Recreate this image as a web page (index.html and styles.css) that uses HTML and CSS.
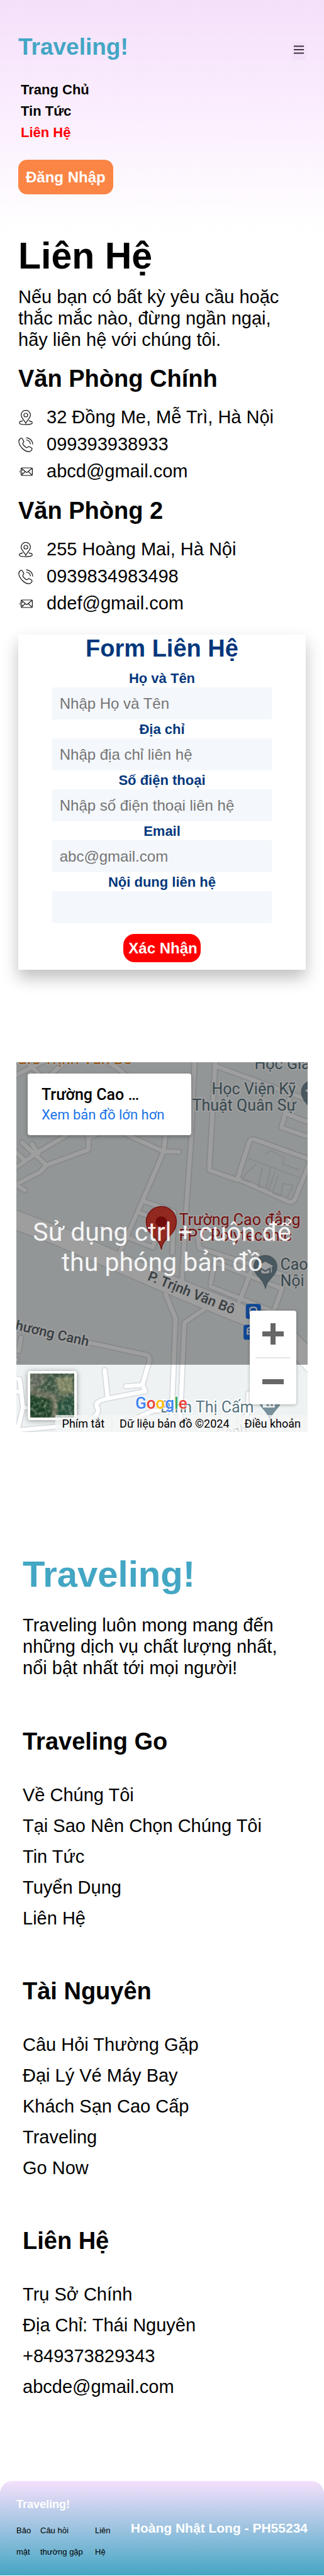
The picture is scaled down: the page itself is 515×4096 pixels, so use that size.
FILE: index.html
```html
<!DOCTYPE html>
<html lang="vi">
<head>
<meta charset="utf-8">
<meta name="viewport" content="width=device-width, initial-scale=1">
<title>Traveling! - Liên Hệ</title>
<link rel="stylesheet" href="styles.css">
</head>
<body>
<svg class="sprite" aria-hidden="true">
  <symbol id="icon-pin" viewBox="0 0 24 24">
    <path d="M12 21 C10 16.500 4.600 12.600 4.600 7.800 A7.400 7.400 0 0 1 19.400 7.800 C19.400 12.600 14 16.500 12 21 Z"/>
    <circle cx="12" cy="8" r="3"/>
    <path d="M7.400 17.200 C4 17.600 1.700 18.700 1.700 20.200 C1.700 22.200 6 23.200 12 23.200 S22.300 22.200 22.300 20.200 C22.300 18.700 20 17.600 16.600 17.200"/>
  </symbol>
  <symbol id="icon-phone" viewBox="0 0 24 24">
    <path d="M4.200 1.800 C2 3.200 .7 4.800 .9 7.200 C1.600 14.500 9.500 22.600 16.300 23.200 C18.600 23.400 20.700 21.600 21.800 19.700 C22.500 18.300 21.800 17.700 20.600 17 L17.800 15.300 C16.600 14.700 16 15 15.200 15.900 C14.300 17 13.400 17 12.300 16.300 C10.400 15.100 8.800 13.500 7.600 11.600 C6.900 10.500 7 9.700 8 8.900 C9 8.100 9.200 7.500 8.600 6.400 L6.800 3 C6 1.700 5.400 1.200 4.200 1.800 Z"/>
    <path d="M12.500 .9 C18.600 1.300 22.900 5.800 23.200 11.600 M12.800 4.500 C16.600 5 19.100 7.500 19.500 11.200"/>
  </symbol>
  <symbol id="icon-mail" viewBox="0 0 24 24">
    <path d="M4.600 8.800 V7.200 Q4.600 6 5.800 6 H21.200 Q22.400 6 22.400 7.200 V16.800 Q22.400 18 21.200 18 H5.800 Q4.600 18 4.600 16.800 V15.500"/>
    <path d="M5 6.500 L12.400 12.800 Q13.500 13.600 14.600 12.800 L22 6.500 M5.200 17.500 L11 11.900 M21.900 17.500 L16.100 11.900 M3.200 9.800 H7 M1.500 12 H6 M3.200 14.200 H7"/>
  </symbol>
</svg>

<header class="header">
  <div class="header-top">
    <a class="logo" href="#">Traveling!</a>
    <button class="burger" type="button" aria-label="Menu">
      <svg viewBox="0 0 16 14" aria-hidden="true"><path d="M0 1.500 H16 M0 7 H16 M0 12.500 H16"/></svg>
    </button>
  </div>
  <nav class="nav">
    <a href="#">Trang Chủ</a>
    <a href="#">Tin Tức</a>
    <a class="active" href="#">Liên Hệ</a>
  </nav>
  <button class="login" type="button">Đăng Nhập</button>
</header>

<main class="main">
  <h1 class="title">Liên Hệ</h1>
  <p class="intro">Nếu bạn có bất kỳ yêu cầu hoặc thắc mắc nào, đừng ngần ngại, hãy liên hệ với chúng tôi.</p>

  <section class="office">
    <h2 class="subtitle">Văn Phòng Chính</h2>
    <ul class="contacts">
      <li><svg class="icon" aria-hidden="true"><use href="#icon-pin"/></svg>32 Đồng Me, Mễ Trì, Hà Nội</li>
      <li><svg class="icon" aria-hidden="true"><use href="#icon-phone"/></svg>099393938933</li>
      <li><svg class="icon" aria-hidden="true"><use href="#icon-mail"/></svg>abcd@gmail.com</li>
    </ul>
  </section>
  <section class="office">
    <h2 class="subtitle">Văn Phòng 2</h2>
    <ul class="contacts">
      <li><svg class="icon" aria-hidden="true"><use href="#icon-pin"/></svg>255 Hoàng Mai, Hà Nội</li>
      <li><svg class="icon" aria-hidden="true"><use href="#icon-phone"/></svg>0939834983498</li>
      <li><svg class="icon" aria-hidden="true"><use href="#icon-mail"/></svg>ddef@gmail.com</li>
    </ul>
  </section>

  <form class="form">
    <h2 class="subtitle">Form Liên Hệ</h2>
    <div class="fields">
      <div class="field"><label for="name">Họ và Tên</label><input id="name" type="text" placeholder="Nhập Họ và Tên"></div>
      <div class="field"><label for="address">Địa chỉ</label><input id="address" type="text" placeholder="Nhập địa chỉ liên hệ"></div>
      <div class="field"><label for="phone">Số điện thoại</label><input id="phone" type="tel" placeholder="Nhập số điện thoại liên hệ"></div>
      <div class="field"><label for="email">Email</label><input id="email" type="email" placeholder="abc@gmail.com"></div>
      <div class="field"><label for="message">Nội dung liên hệ</label><input id="message" type="text"></div>
    </div>
    <button class="submit" type="submit">Xác Nhận</button>
  </form>
</main>

<section class="map" aria-label="Bản đồ">
  <svg class="map-canvas" viewBox="0 0 464 588" preserveAspectRatio="xMidYMid slice">
    <defs>
      <g id="streets">
        <path d="M78 178 L215 105 M140 120 L215 200 M235 185 L320 105 M500 105 Q560 125 610 180"/>
        <path d="M90 755 L120 775 M60 755 L195 680 L225 645 L428 565 L430 505 L390 430 M225 645 L108 528 M60 670 L180 580 L330 485 M155 535 L185 585 M120 620 L60 560 M430 505 L490 470"/>
        <path d="M600 480 L790 573 L866 576 M802 480 L793 573 L690 830 L575 1110 M690 830 L842 885 L835 1100 M670 890 L835 955 M490 965 L740 1072 L760 1010"/>
        <path d="M942 100 L926 500 L900 900 L880 1270 M802 1315 L850 1440 L828 2040 M990 1392 L893 1462 L872 1960"/>
        <path d="M1043 100 L1013 670 L1150 722 M1043 130 L1500 310 M1405 285 L1362 450 L1500 500 M1390 380 L1500 425"/>
        <path d="M1500 615 L1230 510 Q1210 510 1205 530 L1150 715 L1400 835 Q1420 840 1430 815 L1500 630"/>
        <path d="M430 1565 L705 1628 Q730 1638 722 1665 L690 1785 L703 1818 L522 1856 Q460 1870 468 1895 Q490 1935 440 1960 L400 2040 M610 1792 L690 1785 M507 1708 L522 1856 M102 1540 L90 1610 M60 1655 H82 M60 1750 L95 1755 L112 1900 L85 2020 L290 2000 M60 1820 H100 M112 1900 L140 1905 M600 1985 L740 1920 L830 1912"/>
        <path d="M950 960 L965 1075 L1420 1230 M1020 1255 L1040 1150 L1365 1285 L1325 1405 L1020 1275 M1250 1100 L1160 1350 M1203 1828 L1200 1925 L1160 2040 M1440 1960 V2050 M350 1870 L365 1900"/>
      </g>
      <path id="avenue" d="M40 915 L300 1020 L640 1180 L900 1300 L1200 1430 L1400 1550 L1520 1680"/>
    </defs>
    <rect class="land" width="464" height="588"/>
    <g class="roads" transform="scale(.3284 .3065) translate(-78 -111)">
      <use class="street-edge" href="#streets"/><use class="avenue-edge" href="#avenue"/>
      <use class="street" href="#streets"/><use class="avenue" href="#avenue"/>
      <path class="plot" d="M1285 590 L1310 570 L1375 605 L1370 640 L1450 670 M1205 610 L1450 710 M1240 640 L1190 690 L1170 720 L1215 735 M1270 660 L1250 755 L1290 765 L1310 660 M1330 680 L1300 780 M1345 700 L1320 790 L1360 805 L1370 740 L1420 750 L1390 815"/>
    </g>

    <g class="bus" transform="scale(.3284 .3065) translate(-78 -111)">
      <rect x="1190" y="1365" width="73" height="78" rx="12"/><rect x="1179" y="1473" width="73" height="78" rx="12"/>
      <path d="M1210 1418 V1395 Q1210 1382 1226 1382 Q1243 1382 1243 1395 V1418 M1198 1525 V1500 Q1198 1487 1214 1487 M1198 1505 H1220 M1198 1520 H1220"/>
    </g>

    <g class="labels">
      <text class="food" x="3" y="3">afe Trịnh Văn Bô</text>
      <text x="379" y="11">Học Giá</text>
      <text x="311" y="51">Học Viện Kỹ</text>
      <text x="280" y="77">Thuật Quân Sự</text>
      <text class="place" x="259" y="259">Trường Cao đẳng</text>
      <text class="place" x="259" y="284">FPT Polytechnic</text>
      <text x="420" y="330">Cao</text>
      <text x="420" y="356">Nội</text>
      <text x="229" y="557">Đình Thị Cấm</text>
      <text class="road" transform="translate(208 346) rotate(22)">P. Trịnh Văn Bô</text>
      <text class="road" transform="translate(-2 425) rotate(13)">hương Canh</text>
      <text class="road faint" transform="translate(319 598) rotate(-8)">Canh</text>
    </g>

    <g transform="scale(.3284 .3065) translate(-78 -111)">
      <path class="pin-main" d="M781 1082 C775 1020 708 1010 708 938 A73 79 0 0 1 854 938 C854 1010 787 1020 781 1082 Z"/>
      <circle class="pin-dot" cx="781" cy="938" r="28"/>
      <path class="pin" d="M1285 1286 C1278 1235 1229 1222 1229 1170 A56 57 0 0 1 1341 1170 C1341 1222 1292 1235 1285 1286 Z"/>
      <path class="pin-glyph" d="M1248 1168 L1284 1145 L1322 1168 L1284 1190 Z M1265 1187 L1284 1199 L1303 1187 V1203 Q1284 1212 1265 1203 Z M1311 1172 H1316 V1202 H1311 Z"/>
      <path class="pin" d="M1515 385 C1508 335 1459 318 1459 265 A56 60 0 0 1 1571 265 C1571 318 1522 335 1515 385 Z"/>
      <path class="pin-glyph" d="M1476 258 L1515 235 V282 Z"/>
      <path class="pin" d="M1307 1970 C1300 1920 1251 1905 1251 1855 A56 60 0 0 1 1363 1855 C1363 1905 1314 1920 1307 1970 Z"/>
      <path class="pin-glyph" d="M1272 1880 V1902 H1330 V1880 H1322 V1895 H1310 V1880 H1303 V1895 H1290 V1880 Z"/>
    </g>
  </svg>
  <div class="map-shade"></div>
  <p class="map-hint">Sử dụng ctrl + cuộn để thu phóng bản đồ</p>
  <div class="map-card">
    <strong>Trường Cao …</strong>
    <a href="#">Xem bản đồ lớn hơn</a>
  </div>
  <button class="map-satellite" type="button" aria-label="Vệ tinh">
    <svg viewBox="0 0 70 70" preserveAspectRatio="none" aria-hidden="true">
      <filter id="soft" x="-20%" y="-20%" width="140%" height="140%"><feGaussianBlur stdDeviation="2"/></filter>
      <filter id="grain" x="0" y="0" width="100%" height="100%"><feTurbulence type="fractalNoise" baseFrequency=".18" numOctaves="3"/><feColorMatrix values="0 0 0 0 .65  0 0 0 0 .7  0 0 0 0 .55  1.800 0 0 0 -.75"/></filter>
      <rect width="70" height="70" fill="#3b5342"/>
      <g filter="url(#soft)">
        <path d="M0 34 L30 40 L36 70 H0 Z" fill="#1c4128"/><path d="M42 46 L70 36 V70 H42 Z" fill="#25503a"/>
        <path d="M38 8 L66 4 L70 30 L48 34 Z" fill="#7b8260"/><path d="M0 22 L44 34 L38 42 L0 32 Z" fill="#6a6d5b"/>
        <path d="M36 40 L42 38 L41 70 H37 Z" fill="#84816a"/><path d="M0 0 H28 L20 20 L0 24 Z" fill="#5d6459"/>
      </g>
      <rect width="70" height="70" filter="url(#grain)" opacity=".6"/>
    </svg>
  </button>
  <div class="map-google"><span class="g-blue">G</span><span class="g-red">o</span><span class="g-yellow">o</span><span class="g-blue">g</span><span class="g-green">l</span><span class="g-red">e</span></div>
  <div class="map-zoom">
    <button type="button" aria-label="Phóng to"><svg viewBox="0 0 34 34" aria-hidden="true"><path d="M0 17 H34 M17 0 V34"/></svg></button>
    <button type="button" aria-label="Thu nhỏ"><svg viewBox="0 0 34 34" aria-hidden="true"><path d="M0 17 H34"/></svg></button>
  </div>
  <div class="map-legal"><button type="button">Phím tắt</button><span>Dữ liệu bản đồ ©2024</span><a href="#">Điều khoản</a></div>
</section>

<section class="about">
  <h2 class="brand">Traveling!</h2>
  <p class="slogan">Traveling luôn mong mang đến những dịch vụ chất lượng nhất, nổi bật nhất tới mọi người!</p>
  <div class="groups">
    <div class="group">
      <h3 class="subtitle">Traveling Go</h3>
      <ul>
        <li><a href="#">Về Chúng Tôi</a></li>
        <li><a href="#">Tại Sao Nên Chọn Chúng Tôi</a></li>
        <li><a href="#">Tin Tức</a></li>
        <li><a href="#">Tuyển Dụng</a></li>
        <li><a href="#">Liên Hệ</a></li>
      </ul>
    </div>
    <div class="group">
      <h3 class="subtitle">Tài Nguyên</h3>
      <ul>
        <li><a href="#">Câu Hỏi Thường Gặp</a></li>
        <li><a href="#">Đại Lý Vé Máy Bay</a></li>
        <li><a href="#">Khách Sạn Cao Cấp</a></li>
        <li><a href="#">Traveling</a></li>
        <li><a href="#">Go Now</a></li>
      </ul>
    </div>
    <div class="group">
      <h3 class="subtitle">Liên Hệ</h3>
      <ul>
        <li><a href="#">Trụ Sở Chính</a></li>
        <li><a href="#">Địa Chỉ: Thái Nguyên</a></li>
        <li><a href="#">+849373829343</a></li>
        <li><a href="#">abcde@gmail.com</a></li>
      </ul>
    </div>
  </div>
</section>

<footer class="footer">
  <div>
    <p class="footer-brand">Traveling!</p>
    <nav class="footer-links">
      <a href="#">Bảo mật</a>
      <a href="#">Câu hỏi thường gặp</a>
      <a href="#">Liên Hệ</a>
    </nav>
  </div>
  <p class="author">Hoàng Nhật Long - PH55234</p>
</footer>
</body>
</html>
```
FILE: styles.css
```css
* { box-sizing: border-box; }
body, h1, h2, h3, p, ul { margin: 0; padding: 0; }
ul { list-style: none; }
a { color: inherit; text-decoration: none; }
button, input { font: inherit; border: 0; margin: 0; }
button { cursor: pointer; }

body {
  background: #fff;
  color: #000;
  font-family: "Liberation Sans", Arial, sans-serif;
  font-size: 29px;
}
.sprite { display: none; }

/* Header */
.header {
  padding: 54px 29px 59px;
  background: linear-gradient(#f5e0fa, #fbf0fe 55%, #fff);
}
.header-top { display: flex; justify-content: space-between; align-items: flex-end; }
.logo { color: #43a6c4; font-size: 37px; line-height: 42px; font-weight: bold; }
.burger { width: 22px; height: 29px; padding: 5px 3px; background: #f5e0fa; display: flex; }
.burger svg { width: 16px; height: 14px; stroke: #3b303d; stroke-width: 2; }
.nav {
  display: grid;
  justify-items: start;
  margin: 30px 4px 26px;
  font-size: 22px;
  line-height: 34px;
  font-weight: bold;
}
.nav .active { color: #f00; }
.login {
  padding: 0 12px;
  border-radius: 14px;
  background: #fb8545;
  color: #fff;
  font-size: 24px;
  line-height: 55px;
  font-weight: bold;
}

/* Contact details */
.main { padding: 5px 29px 0; }
.title { font-size: 59px; line-height: 68px; }
.intro { margin: 14px 0 23px; padding-right: 12px; line-height: 34px; }
.subtitle { font-size: 38px; line-height: 44px; }
.office + .office { margin-top: 19px; }
.contacts { margin-top: 18px; line-height: 43px; }
.contacts li { display: flex; align-items: center; gap: 21px; }
.icon { flex: none; width: 24px; height: 24px; fill: none; stroke: #111; stroke-width: 1.2; }

/* Contact form */
.form {
  display: flex;
  flex-direction: column;
  align-items: center;
  margin-top: 28px;
  padding-bottom: 12px;
  background: #fff;
  color: #03377c;
  box-shadow: 0 13px 24px rgba(0, 0, 0, .25);
}
.fields { display: grid; gap: 2px; width: 76.5%; margin: 12px 0 17px; }
.field label {
  display: block;
  font-size: 22px;
  line-height: 28px;
  font-weight: bold;
  text-align: center;
}
.field input {
  display: block;
  width: 100%;
  height: 51px;
  padding: 0 12px;
  border-radius: 0;
  background: #f4f7fb;
  font-size: 24px;
}
.field input::placeholder { color: #757575; opacity: 1; }
.submit {
  padding: 0 5px 0 8px;
  border-radius: 18px;
  background: #f00;
  color: #fff;
  font-size: 24px;
  line-height: 45px;
  font-weight: bold;
}

/* Map */
.map {
  position: relative;
  height: 588px;
  margin: 147px 26px 0;
  overflow: hidden;
  font-family: Roboto, sans-serif;
}
.map-canvas { display: block; width: 100%; height: 100%; }
.land { fill: #eef2f3; }
.roads { fill: none; stroke-linecap: round; stroke-linejoin: round; }
.street-edge, .avenue-edge { stroke: #d8dce1; }
.street-edge { stroke-width: 31; }
.street { stroke: #fff; stroke-width: 20; }
.avenue-edge { stroke-width: 104; }
.avenue { stroke: #fff; stroke-width: 94; }
.plot { stroke: #d8dce1; stroke-width: 5; }
.labels {
  fill: #587682;
  stroke: #fff;
  stroke-width: 4;
  stroke-linejoin: round;
  paint-order: stroke;
  font-size: 25px;
}
.labels .food { fill: #f08410; }
.labels .place { fill: #bf1b19; }
.labels .road { fill: #5a656c; font-size: 22px; font-weight: 500; }
.labels .faint { fill: #b0b5ba; }
.pin { fill: #78909c; stroke: #5d7985; stroke-width: 3; }
.pin-glyph { fill: #fff; }
.pin-main { fill: #ea4335; stroke: #b31412; stroke-width: 4; }
.pin-dot { fill: #b31412; }
.bus rect { fill: #1a73f0; }
.bus path { fill: none; stroke: #fff; stroke-width: 7; }

.map-shade { position: absolute; inset: 0 0 107px; background: rgba(0, 0, 0, .38); }
.map-hint {
  position: absolute;
  inset: 0;
  display: flex;
  align-items: center;
  justify-content: center;
  padding: 0 22px;
  color: rgba(255, 255, 255, .92);
  font-size: 41px;
  line-height: 48px;
  text-align: center;
}
.map-card {
  position: absolute;
  top: 18px;
  left: 18px;
  width: 260px;
  height: 98px;
  padding: 18px 22px;
  border-radius: 4px;
  background: #fff;
  box-shadow: 0 2px 6px rgba(0, 0, 0, .3);
  line-height: 31px;
}
.map-card strong { display: block; font-size: 25px; line-height: 32px; font-weight: 500; }
.map-card a { display: block; color: #1a73e8; font-size: 22px; }
.map-satellite {
  position: absolute;
  bottom: 19px;
  left: 18px;
  width: 78px;
  height: 78px;
  padding: 0;
  border: 4px solid #fff;
  border-radius: 4px;
  background: #fff;
  box-shadow: 0 1px 8px rgba(0, 0, 0, .4);
}
.map-satellite svg { display: block; width: 100%; height: 100%; }
.map-google {
  position: absolute;
  bottom: 29px;
  left: 189px;
  font-size: 26px;
  line-height: 34px;
  font-weight: 500;
  text-shadow: 0 0 2px #fff, 0 0 2px #fff, 0 0 3px #fff;
}
.g-blue { color: #4285f4; }
.g-red { color: #ea4335; }
.g-yellow { color: #fbbc04; }
.g-green { color: #34a853; }
.map-zoom {
  position: absolute;
  right: 18px;
  bottom: 44px;
  width: 74px;
  border-radius: 4px;
  background: #fff;
  box-shadow: 0 1px 5px rgba(0, 0, 0, .3);
}
.map-zoom button { display: block; width: 100%; height: 74px; padding: 20px; background: none; }
.map-zoom button + button { width: 56px; height: 75px; margin: 0 auto; padding: 20px 11px; border-top: 2px solid #e6e6e6; }
.map-zoom svg { display: block; width: 34px; height: 34px; stroke: #666; stroke-width: 8; }
.map-legal {
  position: absolute;
  right: 0;
  bottom: 0;
  display: flex;
  gap: 2px;
  font-size: 18px;
  line-height: 26px;
  white-space: nowrap;
}
.map-legal > * { padding: 1px 11px 0; background: rgba(245, 245, 245, .75); color: #000; }

/* Site links */
.about { padding: 192px 36px 125px; }
.brand { color: #43a6c4; font-size: 58px; line-height: 68px; }
.slogan { margin: 30px 0 78px; line-height: 34px; }
.groups { display: grid; gap: 69px; }
.group ul { margin-top: 39px; line-height: 49px; }

/* Footer */
.footer {
  display: flex;
  justify-content: space-between;
  align-items: center;
  padding: 20px 26px;
  border-radius: 20px 20px 0 0;
  background: linear-gradient(#f5e0fc, #44a6c4);
}
.footer-brand { color: #fff; font-size: 18px; line-height: 34px; font-weight: bold; }
.footer-links {
  display: grid;
  grid-template-columns: 26px 75px 26px;
  column-gap: 12px;
  margin-top: 8px;
  font-size: 13px;
  line-height: 34px;
}
.author { color: #fff; font-size: 21px; font-weight: bold; white-space: nowrap; }
```
